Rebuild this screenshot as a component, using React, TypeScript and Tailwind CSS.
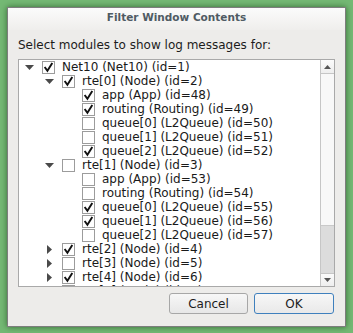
import React from "react";

type Row = { depth: number; label: string; checked: boolean; exp?: "down" | "right" };

const rows: Row[] = [
  { depth: 0, label: "Net10 (Net10) (id=1)", checked: true, exp: "down" },
  { depth: 1, label: "rte[0] (Node) (id=2)", checked: true, exp: "down" },
  { depth: 2, label: "app (App) (id=48)", checked: true },
  { depth: 2, label: "routing (Routing) (id=49)", checked: true },
  { depth: 2, label: "queue[0] (L2Queue) (id=50)", checked: false },
  { depth: 2, label: "queue[1] (L2Queue) (id=51)", checked: false },
  { depth: 2, label: "queue[2] (L2Queue) (id=52)", checked: true },
  { depth: 1, label: "rte[1] (Node) (id=3)", checked: false, exp: "down" },
  { depth: 2, label: "app (App) (id=53)", checked: false },
  { depth: 2, label: "routing (Routing) (id=54)", checked: false },
  { depth: 2, label: "queue[0] (L2Queue) (id=55)", checked: true },
  { depth: 2, label: "queue[1] (L2Queue) (id=56)", checked: true },
  { depth: 2, label: "queue[2] (L2Queue) (id=57)", checked: false },
  { depth: 1, label: "rte[2] (Node) (id=4)", checked: true, exp: "right" },
  { depth: 1, label: "rte[3] (Node) (id=5)", checked: false, exp: "right" },
  { depth: 1, label: "rte[4] (Node) (id=6)", checked: true, exp: "right" },
  { depth: 1, label: "rte[5] (Node) (id=7)", checked: false, exp: "right" },
];

const indent = ["pl-0", "pl-[20px]", "pl-[40px]"];

function Expander({ dir }: { dir?: "down" | "right" }) {
  return (
    <div className="w-[23px] h-[14px] flex items-center justify-center pr-[3px]">
      {dir === "down" && (
        <svg width="9" height="5" viewBox="0 0 9 5">
          <path d="M0 0 L9 0 L4.5 5 Z" fill="#4a4a4a" />
        </svg>
      )}
      {dir === "right" && (
        <svg width="5" height="9" viewBox="0 0 5 9">
          <path d="M0 0 L5 4.5 L0 9 Z" fill="#4a4a4a" />
        </svg>
      )}
    </div>
  );
}

function Check({ checked }: { checked: boolean }) {
  return (
    <div className="w-[13px] h-[13px] border border-[#9c9c9c] bg-white flex items-center justify-center shrink-0">
      {checked && (
        <svg width="11" height="11" viewBox="0 0 11 11">
          <path d="M2.2 5.8 L4.4 8.8 L8.8 1.8" stroke="#111" strokeWidth="1.9" fill="none" strokeLinecap="square" />
        </svg>
      )}
    </div>
  );
}

export default function App() {
  return (
    <div
      className="w-[353px] h-[333px] bg-[#74b974] pt-[7px] pl-[7px] overflow-hidden"
      style={{ fontFamily: '"DejaVu Sans", sans-serif' }}
    >
      <div className="w-[339px] h-[320px] border border-[#7d7d7d] bg-[#edecea] flex flex-col shadow-[0_0_6px_rgba(0,40,0,0.55)]">
        <div className="h-[22px] bg-gradient-to-b from-[#fbfbfb] to-[#efeeec] flex items-start pt-[3px] justify-center">
          <span className="text-[10.5px] font-bold text-[#4f5b63] leading-[12px]">Filter Window Contents</span>
        </div>
        <div className="h-[29px] flex items-center pl-[10px] text-[12px] text-[#1c1c1c]">
          Select modules to show log messages for:
        </div>
        <div className="mx-[10px] h-[228px] border border-[#a9a9a9] bg-white flex overflow-hidden">
          <div className="flex-1 overflow-hidden">
            {rows.map((r, i) => (
              <div key={i} className={`h-[14px] flex items-center ${indent[r.depth]}`}>
                <Expander dir={r.exp} />
                <Check checked={r.checked} />
                <span className="ml-[7px] text-[12px] leading-none text-[#1a1a1a] whitespace-nowrap">{r.label}</span>
              </div>
            ))}
          </div>
          <div className="w-[14px] border-l border-[#c6c6c6] flex flex-col bg-[#f7f7f7]">
            <div className="h-[14px] border-b border-[#c6c6c6] flex items-center justify-center bg-gradient-to-b from-[#fbfbfb] to-[#eeeeee]">
              <svg width="7" height="4" viewBox="0 0 7 4">
                <path d="M0 4 L7 4 L3.5 0 Z" fill="#555" />
              </svg>
            </div>
            <div className="flex-1 bg-[#f8f8f8]" />
            <div className="h-[48px] bg-[#dcdcdc] border-t border-[#c9c9c9]" />
            <div className="h-[13px] border-t border-[#c6c6c6] flex items-center justify-center bg-gradient-to-b from-[#fbfbfb] to-[#eeeeee]">
              <svg width="7" height="4" viewBox="0 0 7 4">
                <path d="M0 0 L7 0 L3.5 4 Z" fill="#555" />
              </svg>
            </div>
          </div>
        </div>
        <div className="mt-[6px] flex justify-end gap-[6px] pr-[11px]">
          <button className="w-[79px] h-[21px] rounded-[3px] border border-[#a7a7a7] bg-gradient-to-b from-[#f7f7f7] to-[#e7e7e7] text-[12px] text-[#1c1c1c] leading-none">
            Cancel
          </button>
          <button className="w-[80px] h-[21px] rounded-[3px] border border-[#3f80bd] bg-gradient-to-b from-[#f7f7f7] to-[#e9e9e9] text-[12px] text-[#1c1c1c] leading-none">
            OK
          </button>
        </div>
      </div>
    </div>
  );
}
